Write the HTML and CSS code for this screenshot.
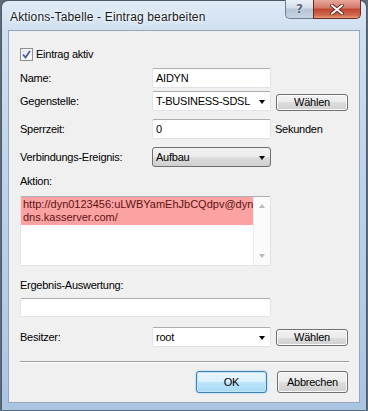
FILE: index.html
```html
<!DOCTYPE html>
<html>
<head>
<meta charset="utf-8">
<link rel="stylesheet" href="styles.css">
</head>
<body>
<div class="window">
  <div class="titlebar">
    <span class="title">Aktions-Tabelle - Eintrag bearbeiten</span>
    <div class="caption-btns">
      <div class="cbtn help">?</div>
      <div class="cbtn close">
        <svg width="14" height="11" viewBox="0 0 14 11"><path d="M2 1.5 L12 9.5 M12 1.5 L2 9.5" stroke="#5a1a10" stroke-width="3.6" stroke-linecap="round"/><path d="M2 1.5 L12 9.5 M12 1.5 L2 9.5" stroke="#ffffff" stroke-width="2.2" stroke-linecap="round"/></svg>
      </div>
    </div>
  </div>
  <div class="client">
    <label class="check-row">
      <span class="checkbox">
        <svg width="9" height="9" viewBox="0 0 9 9"><path d="M1 4.5 L3.5 7.5 L8 1" fill="none" stroke="#4b5e99" stroke-width="1.8"/></svg>
      </span>
      <span>Eintrag aktiv</span>
    </label>

    <div class="row r-name">
      <span class="lbl">Name:</span>
      <div class="field textbox">AIDYN</div>
    </div>

    <div class="row r-gegen">
      <span class="lbl">Gegenstelle:</span>
      <div class="field textbox combo">T-BUSINESS-SDSL<span class="arrow"></span></div>
      <div class="btn small first">Wählen</div>
    </div>

    <div class="row r-sperr">
      <span class="lbl">Sperrzeit:</span>
      <div class="field textbox">0</div>
      <span class="unit">Sekunden</span>
    </div>

    <div class="row r-verb">
      <span class="lbl">Verbindungs-Ereignis:</span>
      <div class="field dropdown">Aufbau<span class="arrow"></span></div>
    </div>

    <div class="lbl block l-aktion">Aktion:</div>
    <div class="textarea">
      <div class="ta-text"><span class="hl">http://dyn0123456:uLWBYamEhJbCQdpv@dyn<br>dns.kasserver.com/</span></div>
      <div class="vscroll">
        <span class="sarrow up"></span>
        <span class="sarrow down"></span>
      </div>
    </div>

    <div class="lbl block l-erg">Ergebnis-Auswertung:</div>
    <div class="textbox wide"></div>

    <div class="row r-besitzer">
      <span class="lbl">Besitzer:</span>
      <div class="field textbox combo">root<span class="arrow"></span></div>
      <div class="btn small">Wählen</div>
    </div>

    <div class="separator"></div>

    <div class="actions">
      <div class="btn default">OK</div>
      <div class="btn">Abbrechen</div>
    </div>
  </div>
</div>
</body>
</html>
```

FILE: styles.css
```css
html, body {
  margin: 0;
  padding: 0;
}
body {
  width: 368px;
  height: 411px;
  background: #5d6b78;
  font-family: "Liberation Sans", Arial, sans-serif;
  font-size: 11px;
  color: #000;
  overflow: hidden;
}
.window {
  margin-left: 1px;
  width: 366px;
  height: 410px;
  box-sizing: border-box;
  border: 1px solid #4d5a68;
  border-bottom: none;
  border-radius: 7px 7px 0 0;
  background: linear-gradient(180deg, #dfeaf6 0px, #cfe0f1 30px, #bcd2ea 200px, #aac5e3 411px);
  display: flex;
  flex-direction: column;
}
.titlebar {
  height: 29px;
  display: flex;
  justify-content: space-between;
  align-items: flex-start;
}
.title {
  margin-left: 8px;
  margin-top: 9px;
  font-family: "Liberation Sans", Arial, sans-serif;
  font-size: 12px;
  letter-spacing: 0.15px;
  color: #1a1a1a;
  text-shadow: 0 0 6px #fff, 0 0 3px #fff;
}
.caption-btns {
  display: flex;
  margin-right: 5px;
  margin-top: -1px;
}
.cbtn {
  height: 19px;
  box-sizing: border-box;
  border: 1px solid #6f7e91;
  border-top: none;
  display: flex;
  align-items: center;
  justify-content: center;
}
.help {
  width: 28px;
  border-radius: 0 0 0 5px;
  border-right: none;
  background: linear-gradient(180deg, #e9eff6 0%, #d3dde9 45%, #b6c4d5 50%, #c6d3e2 100%);
  color: #5a6679;
  font-family: "DejaVu Sans", sans-serif;
  font-weight: bold;
  font-size: 12px;
  text-shadow: 0 0 2px #fff;
}
.close {
  width: 48px;
  border-radius: 0 0 5px 0;
  border-color: #6d2a22;
  background: linear-gradient(180deg, #e9a99c 0%, #d47768 45%, #c2432f 50%, #cf6a4e 85%, #e7a07a 100%);
}
.client {
  margin: 0 6px 0 6px;
  height: 373px;
  box-sizing: border-box;
  border: 1px solid #93a6bd;
  background: #f0f0f0;
  padding: 16px 0 0 11px;
  display: flex;
  flex-direction: column;
  letter-spacing: -0.25px;
}
.check-row {
  height: 14px;
  display: flex;
  align-items: center;
  gap: 3px;
}
.checkbox {
  width: 13px;
  height: 13px;
  box-sizing: border-box;
  border: 1px solid #8e8f8f;
  background: linear-gradient(135deg, #dcdee1 0%, #f4f5f6 60%, #ffffff 100%);
  display: flex;
  align-items: center;
  justify-content: center;
  box-shadow: inset 0 0 0 1px #f4f4f4;
}
.row {
  display: grid;
  grid-template-columns: 127px 119px 72px;
  column-gap: 5px;
  align-items: center;
  height: 20px;
}
.r-name { margin-top: 7px; }
.r-gegen { margin-top: 3px; }
.r-sperr { margin-top: 8px; }
.r-verb { margin-top: 8px; }
.r-besitzer { margin-top: 10px; }
.lbl.block { height: 14px; line-height: 14px; }
.l-aktion { margin-top: 7px; }
.l-erg { margin-top: 12px; }
.textbox {
  height: 20px;
  box-sizing: border-box;
  background: #fff;
  border: 1px solid #e2e3ea;
  border-top-color: #abadb3;
  border-radius: 2px;
  padding-left: 3px;
  line-height: 18px;
  position: relative;
}
.unit { margin-left: -1px; }
.combo .arrow,
.dropdown .arrow {
  position: absolute;
  right: 5px;
  top: 8px;
  width: 0;
  height: 0;
  border-left: 3.5px solid transparent;
  border-right: 3.5px solid transparent;
  border-top: 4px solid #000;
}
.dropdown {
  height: 20px;
  box-sizing: border-box;
  border: 1px solid #707070;
  border-radius: 3px;
  background: linear-gradient(180deg, #f2f2f2 0%, #ebebeb 50%, #dddddd 50%, #cfcfcf 100%);
  padding-left: 3px;
  line-height: 18px;
  position: relative;
}
.btn {
  height: 18px;
  box-sizing: border-box;
  border: 1px solid #707070;
  border-radius: 3px;
  background: linear-gradient(180deg, #f2f2f2 0%, #ebebeb 50%, #dddddd 50%, #cfcfcf 100%);
  box-shadow: inset 0 0 0 1px #fbfbfb;
  text-align: center;
  line-height: 16px;
}
.btn.small {
  height: 17px;
  line-height: 15px;
}
.btn.first {
  margin-top: 2px;
}
.textarea {
  margin-top: 8px;
  width: 251px;
  height: 70px;
  box-sizing: border-box;
  background: #fff;
  border: 1px solid #e2e3ea;
  border-top-color: #abadb3;
  border-radius: 2px;
  display: flex;
}
.ta-text {
  flex: 1;
  letter-spacing: 0;
}
.hl {
  display: block;
  background: #fda2a2;
  color: #5b1414;
  padding: 1px 0 1px 2px;
  line-height: 13px;
}
.vscroll {
  width: 17px;
  background: #fafafa;
  border-left: 1px solid #ececec;
  display: flex;
  flex-direction: column;
  justify-content: space-between;
  align-items: center;
  padding: 7px 0 7px;
}
.sarrow {
  width: 0;
  height: 0;
  border-left: 3.5px solid transparent;
  border-right: 3.5px solid transparent;
}
.sarrow.up { border-bottom: 4px solid #b9b9b9; }
.sarrow.down { border-top: 4px solid #b9b9b9; }
.wide {
  margin-top: 6px;
  width: 251px;
  height: 19px;
}
.separator {
  margin-top: 14px;
  width: 329px;
  height: 1px;
  background: #a0a0a0;
  border-bottom: 1px solid #fff;
}
.actions {
  margin-top: 8px;
  width: 328px;
  display: flex;
  justify-content: flex-end;
  gap: 10px;
}
.actions .btn {
  width: 71px;
  height: 22px;
  line-height: 20px;
}
.btn.default {
  border-color: #3c7fb1;
  background: linear-gradient(180deg, #eaf6fd 0%, #d9f0fc 50%, #bee6fd 50%, #a7d9f5 100%);
  box-shadow: inset 0 0 0 1px #c4e5f6, 0 0 2px #7ec3ec;
}
```
